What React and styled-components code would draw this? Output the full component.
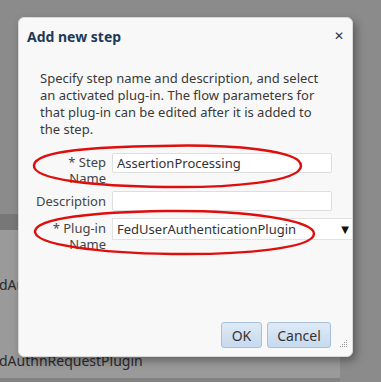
import React from 'react';
import styled, { createGlobalStyle } from 'styled-components';

const Global = createGlobalStyle`
  html, body { margin: 0; padding: 0; }
  body { font-family: "Noto Sans", "DejaVu Sans", sans-serif; }
`;

const Page = styled.div`
  position: relative;
  width: 381px;
  height: 382px;
  overflow: hidden;
  background: #8b8b8b;
  display: flex;
  flex-direction: column;
`;

const TopArea = styled.div`
  height: 214px;
  flex-shrink: 0;
`;

const TableHead = styled.div`
  width: 340px;
  height: 16px;
  flex-shrink: 0;
  background: #777777;
`;

const TableBody = styled.div`
  width: 340px;
  flex: 1;
  min-height: 0;
  background: #9a9a9a;
  padding-top: 45px;
  box-sizing: border-box;
  border-bottom: 4px solid #838383;
`;

const BgRow = styled.div`
  height: 76px;
  font-size: 14px;
  line-height: 20px;
  color: #2b2b2b;
  margin-left: -1px;
`;

const Dialog = styled.div`
  position: absolute;
  left: 18px;
  top: 17px;
  width: 335px;
  height: 340px;
  box-sizing: border-box;
  background: #f8f8f8;
  border: 1px solid #d8d8d8;
  border-radius: 6px;
  box-shadow: 3px 4px 8px rgba(0, 0, 0, 0.35);
  display: flex;
  flex-direction: column;
`;

const TitleBar = styled.div`
  display: flex;
  justify-content: space-between;
  align-items: center;
  padding: 9px 8px 0 8px;
  height: 18px;
`;

const Title = styled.div`
  font-weight: bold;
  font-size: 14px;
  color: #1d3b58;
`;

const Close = styled.div`
  font-size: 12px;
  color: #333;
  line-height: 18px;
`;

const Intro = styled.p`
  margin: 25px 0 0 21px;
  font-size: 13px;
  line-height: 17px;
  color: #3a3a3a;
`;

const Row = styled.div`
  display: flex;
  align-items: flex-start;
  margin-top: ${p => p.$gap}px;
`;

const Label = styled.div`
  width: 87px;
  text-align: right;
  font-size: 13px;
  line-height: 16px;
  color: #444;
  margin-top: ${p => p.$top || 0}px;
`;

const Input = styled.div`
  margin-left: 6px;
  width: 220px;
  height: ${p => p.$h || 20}px;
  box-sizing: border-box;
  background: #fff;
  border: 1px solid #dedede;
  border-radius: 2px;
  font-size: 13px;
  line-height: 18px;
  padding-left: 4px;
  color: #333;
`;

const Select = styled.div`
  margin-left: 6px;
  flex: 1;
  height: 22px;
  box-sizing: border-box;
  background: #fff;
  border: 1px solid #e2e2e2;
  border-right: none;
  display: flex;
  justify-content: space-between;
  align-items: center;
  font-size: 13px;
  color: #333;
  padding: 0 3px 0 4px;
`;

const Arrow = styled.span`
  font-size: 10px;
  color: #111;
`;

const Footer = styled.div`
  margin-top: auto;
  display: flex;
  justify-content: flex-end;
  gap: 5px;
  padding: 0 21px 8px 0;
`;

const Button = styled.button`
  height: 26px;
  min-width: ${p => p.$w}px;
  font-family: "Noto Sans", "DejaVu Sans", sans-serif;
  font-size: 14px;
  color: #333;
  background: linear-gradient(#dfeaf6, #c6d9ee);
  border: 1px solid #a8c0da;
  border-radius: 3px;
  padding: 0 8px;
`;

const Grip = styled.svg`
  position: absolute;
  right: 4px;
  bottom: 8px;
`;

const Marks = styled.svg`
  position: absolute;
  left: 0;
  top: 0;
  pointer-events: none;
`;

export default function App() {
  return (
    <>
      <Global />
      <Page>
        <TopArea />
        <TableHead />
        <TableBody>
          <BgRow>dAuthnRequestPlugin</BgRow>
          <BgRow>dAuthnRequestPlugin</BgRow>
        </TableBody>

        <Dialog>
          <TitleBar>
            <Title>Add new step</Title>
            <Close>✕</Close>
          </TitleBar>
          <Intro>
            Specify step name and description, and select<br />
            an activated plug-in. The flow parameters for<br />
            that plug-in can be edited after it is added to<br />
            the step.
          </Intro>
          <Row $gap={15}>
            <Label $top={1}>* Step<br />Name</Label>
            <Input>AssertionProcessing</Input>
          </Row>
          <Row $gap={5}>
            <Label $top={2}>Description</Label>
            <Input />
          </Row>
          <Row $gap={7}>
            <Label $top={2}>* Plug-in<br />Name</Label>
            <Select>
              FedUserAuthenticationPlugin
              <Arrow>▼</Arrow>
            </Select>
          </Row>
          <Footer>
            <Button $w={41}>OK</Button>
            <Button $w={64}>Cancel</Button>
          </Footer>
          <Grip width="8" height="8" viewBox="0 0 8 8">
            <g fill="#9a9a9a">
              <rect x="6" y="0" width="1" height="1" />
              <rect x="4" y="2" width="1" height="1" />
              <rect x="6" y="2" width="1" height="1" />
              <rect x="2" y="4" width="1" height="1" />
              <rect x="4" y="4" width="1" height="1" />
              <rect x="6" y="4" width="1" height="1" />
              <rect x="0" y="6" width="1" height="1" />
              <rect x="2" y="6" width="1" height="1" />
              <rect x="4" y="6" width="1" height="1" />
              <rect x="6" y="6" width="1" height="1" />
            </g>
          </Grip>
        </Dialog>

        <Marks width="381" height="382">
          <path
            d="M160 146 C 230 144, 302 150, 301 166 C 300 182, 230 188, 165 187 C 95 186, 32 180, 34 165 C 36 150, 100 147, 160 146 Z"
            fill="none"
            stroke="#e00d0d"
            strokeWidth="2.5"
          />
          <path
            d="M165 211 C 245 210, 315 220, 314 234 C 313 248, 245 255, 172 254 C 100 253, 33 245, 35 231 C 37 218, 95 212, 165 211 Z"
            fill="none"
            stroke="#e00d0d"
            strokeWidth="2.5"
          />
        </Marks>
      </Page>
    </>
  );
}
